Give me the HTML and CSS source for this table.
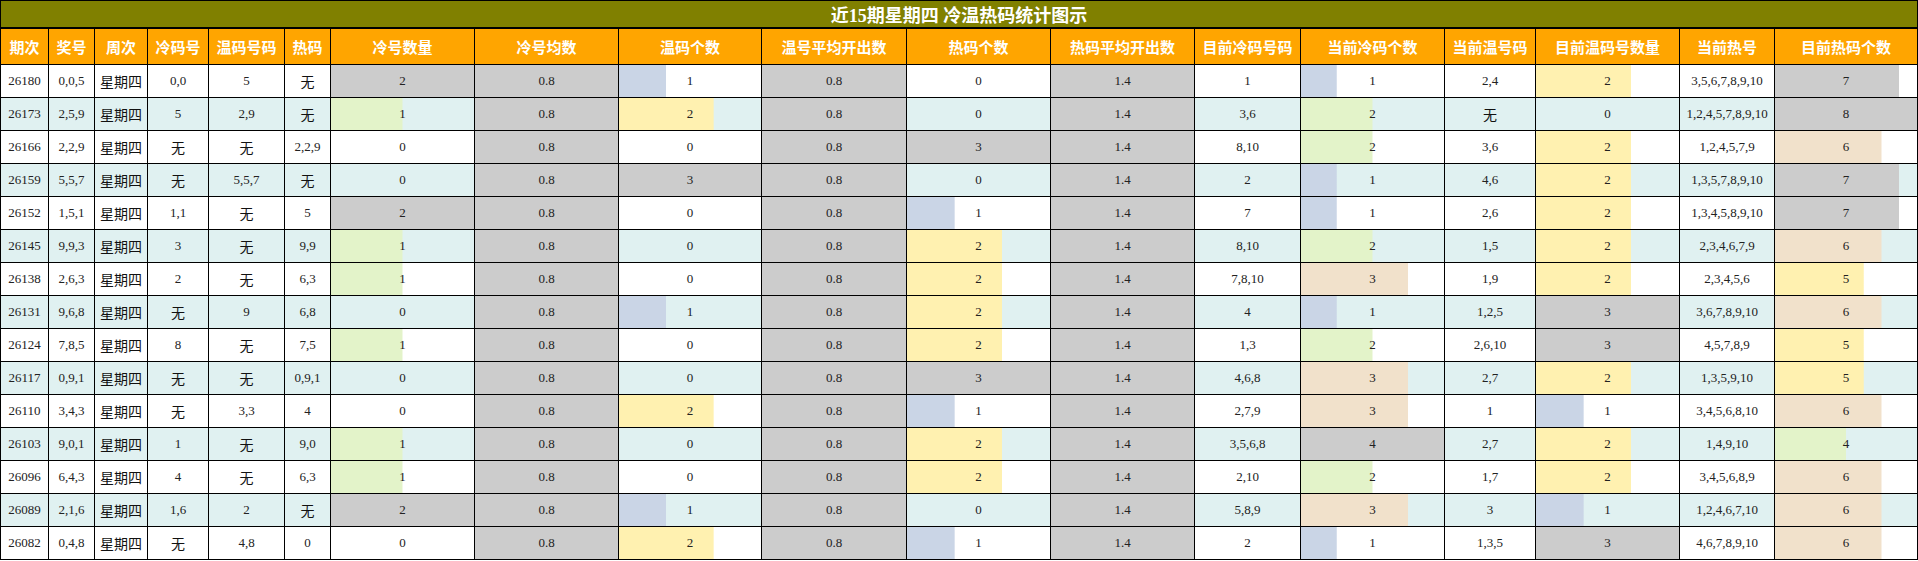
FILE: index.html
```html
<!DOCTYPE html>
<html lang="zh-CN">
<head>
<meta charset="utf-8">
<title>近15期星期四 冷温热码统计图示</title>
<link rel="stylesheet" href="styles.css">
</head>
<body>
<table class="stat">
<colgroup>
<col style="width:48px"><col style="width:46px"><col style="width:53px"><col style="width:61px"><col style="width:76px"><col style="width:46px">
<col style="width:144px"><col style="width:144px"><col style="width:143px"><col style="width:145px"><col style="width:144px"><col style="width:144px">
<col style="width:106px"><col style="width:144px"><col style="width:91px"><col style="width:144px"><col style="width:95px"><col style="width:143px">
</colgroup>
<thead>
<tr class="title-row"><th colspan="18">近15期星期四 冷温热码统计图示</th></tr>
<tr class="head-row">
<th>期次</th><th>奖号</th><th>周次</th><th>冷码号</th><th>温码号码</th><th>热码</th><th>冷号数量</th><th>冷号均数</th><th>温码个数</th><th>温号平均开出数</th><th>热码个数</th><th>热码平均开出数</th><th>目前冷码号码</th><th>当前冷码个数</th><th>当前温号码</th><th>目前温码号数量</th><th>当前热号</th><th>目前热码个数</th>
</tr>
</thead>
<tbody>
<tr><td>26180</td><td>0,0,5</td><td class="cjk">星期四</td><td>0,0</td><td>5</td><td class="cjk">无</td><td class="bar gray" style="--w:100%">2</td><td class="avg">0.8</td><td class="bar blue" style="--w:33.33%">1</td><td class="avg">0.8</td><td>0</td><td class="avg">1.4</td><td>1</td><td class="bar blue" style="--w:25%">1</td><td>2,4</td><td class="bar yellow" style="--w:66.67%">2</td><td>3,5,6,7,8,9,10</td><td class="bar gray" style="--w:87.5%">7</td></tr>
<tr><td>26173</td><td>2,5,9</td><td class="cjk">星期四</td><td>5</td><td>2,9</td><td class="cjk">无</td><td class="bar green" style="--w:50%">1</td><td class="avg">0.8</td><td class="bar yellow" style="--w:66.67%">2</td><td class="avg">0.8</td><td>0</td><td class="avg">1.4</td><td>3,6</td><td class="bar green" style="--w:50%">2</td><td class="cjk">无</td><td>0</td><td>1,2,4,5,7,8,9,10</td><td class="bar gray" style="--w:100%">8</td></tr>
<tr><td>26166</td><td>2,2,9</td><td class="cjk">星期四</td><td class="cjk">无</td><td class="cjk">无</td><td>2,2,9</td><td>0</td><td class="avg">0.8</td><td>0</td><td class="avg">0.8</td><td class="bar gray" style="--w:100%">3</td><td class="avg">1.4</td><td>8,10</td><td class="bar green" style="--w:50%">2</td><td>3,6</td><td class="bar yellow" style="--w:66.67%">2</td><td>1,2,4,5,7,9</td><td class="bar tan" style="--w:75%">6</td></tr>
<tr><td>26159</td><td>5,5,7</td><td class="cjk">星期四</td><td class="cjk">无</td><td>5,5,7</td><td class="cjk">无</td><td>0</td><td class="avg">0.8</td><td class="bar gray" style="--w:100%">3</td><td class="avg">0.8</td><td>0</td><td class="avg">1.4</td><td>2</td><td class="bar blue" style="--w:25%">1</td><td>4,6</td><td class="bar yellow" style="--w:66.67%">2</td><td>1,3,5,7,8,9,10</td><td class="bar gray" style="--w:87.5%">7</td></tr>
<tr><td>26152</td><td>1,5,1</td><td class="cjk">星期四</td><td>1,1</td><td class="cjk">无</td><td>5</td><td class="bar gray" style="--w:100%">2</td><td class="avg">0.8</td><td>0</td><td class="avg">0.8</td><td class="bar blue" style="--w:33.33%">1</td><td class="avg">1.4</td><td>7</td><td class="bar blue" style="--w:25%">1</td><td>2,6</td><td class="bar yellow" style="--w:66.67%">2</td><td>1,3,4,5,8,9,10</td><td class="bar gray" style="--w:87.5%">7</td></tr>
<tr><td>26145</td><td>9,9,3</td><td class="cjk">星期四</td><td>3</td><td class="cjk">无</td><td>9,9</td><td class="bar green" style="--w:50%">1</td><td class="avg">0.8</td><td>0</td><td class="avg">0.8</td><td class="bar yellow" style="--w:66.67%">2</td><td class="avg">1.4</td><td>8,10</td><td class="bar green" style="--w:50%">2</td><td>1,5</td><td class="bar yellow" style="--w:66.67%">2</td><td>2,3,4,6,7,9</td><td class="bar tan" style="--w:75%">6</td></tr>
<tr><td>26138</td><td>2,6,3</td><td class="cjk">星期四</td><td>2</td><td class="cjk">无</td><td>6,3</td><td class="bar green" style="--w:50%">1</td><td class="avg">0.8</td><td>0</td><td class="avg">0.8</td><td class="bar yellow" style="--w:66.67%">2</td><td class="avg">1.4</td><td>7,8,10</td><td class="bar tan" style="--w:75%">3</td><td>1,9</td><td class="bar yellow" style="--w:66.67%">2</td><td>2,3,4,5,6</td><td class="bar yellow" style="--w:62.5%">5</td></tr>
<tr><td>26131</td><td>9,6,8</td><td class="cjk">星期四</td><td class="cjk">无</td><td>9</td><td>6,8</td><td>0</td><td class="avg">0.8</td><td class="bar blue" style="--w:33.33%">1</td><td class="avg">0.8</td><td class="bar yellow" style="--w:66.67%">2</td><td class="avg">1.4</td><td>4</td><td class="bar blue" style="--w:25%">1</td><td>1,2,5</td><td class="bar gray" style="--w:100%">3</td><td>3,6,7,8,9,10</td><td class="bar tan" style="--w:75%">6</td></tr>
<tr><td>26124</td><td>7,8,5</td><td class="cjk">星期四</td><td>8</td><td class="cjk">无</td><td>7,5</td><td class="bar green" style="--w:50%">1</td><td class="avg">0.8</td><td>0</td><td class="avg">0.8</td><td class="bar yellow" style="--w:66.67%">2</td><td class="avg">1.4</td><td>1,3</td><td class="bar green" style="--w:50%">2</td><td>2,6,10</td><td class="bar gray" style="--w:100%">3</td><td>4,5,7,8,9</td><td class="bar yellow" style="--w:62.5%">5</td></tr>
<tr><td>26117</td><td>0,9,1</td><td class="cjk">星期四</td><td class="cjk">无</td><td class="cjk">无</td><td>0,9,1</td><td>0</td><td class="avg">0.8</td><td>0</td><td class="avg">0.8</td><td class="bar gray" style="--w:100%">3</td><td class="avg">1.4</td><td>4,6,8</td><td class="bar tan" style="--w:75%">3</td><td>2,7</td><td class="bar yellow" style="--w:66.67%">2</td><td>1,3,5,9,10</td><td class="bar yellow" style="--w:62.5%">5</td></tr>
<tr><td>26110</td><td>3,4,3</td><td class="cjk">星期四</td><td class="cjk">无</td><td>3,3</td><td>4</td><td>0</td><td class="avg">0.8</td><td class="bar yellow" style="--w:66.67%">2</td><td class="avg">0.8</td><td class="bar blue" style="--w:33.33%">1</td><td class="avg">1.4</td><td>2,7,9</td><td class="bar tan" style="--w:75%">3</td><td>1</td><td class="bar blue" style="--w:33.33%">1</td><td>3,4,5,6,8,10</td><td class="bar tan" style="--w:75%">6</td></tr>
<tr><td>26103</td><td>9,0,1</td><td class="cjk">星期四</td><td>1</td><td class="cjk">无</td><td>9,0</td><td class="bar green" style="--w:50%">1</td><td class="avg">0.8</td><td>0</td><td class="avg">0.8</td><td class="bar yellow" style="--w:66.67%">2</td><td class="avg">1.4</td><td>3,5,6,8</td><td class="bar gray" style="--w:100%">4</td><td>2,7</td><td class="bar yellow" style="--w:66.67%">2</td><td>1,4,9,10</td><td class="bar green" style="--w:50%">4</td></tr>
<tr><td>26096</td><td>6,4,3</td><td class="cjk">星期四</td><td>4</td><td class="cjk">无</td><td>6,3</td><td class="bar green" style="--w:50%">1</td><td class="avg">0.8</td><td>0</td><td class="avg">0.8</td><td class="bar yellow" style="--w:66.67%">2</td><td class="avg">1.4</td><td>2,10</td><td class="bar green" style="--w:50%">2</td><td>1,7</td><td class="bar yellow" style="--w:66.67%">2</td><td>3,4,5,6,8,9</td><td class="bar tan" style="--w:75%">6</td></tr>
<tr><td>26089</td><td>2,1,6</td><td class="cjk">星期四</td><td>1,6</td><td>2</td><td class="cjk">无</td><td class="bar gray" style="--w:100%">2</td><td class="avg">0.8</td><td class="bar blue" style="--w:33.33%">1</td><td class="avg">0.8</td><td>0</td><td class="avg">1.4</td><td>5,8,9</td><td class="bar tan" style="--w:75%">3</td><td>3</td><td class="bar blue" style="--w:33.33%">1</td><td>1,2,4,6,7,10</td><td class="bar tan" style="--w:75%">6</td></tr>
<tr><td>26082</td><td>0,4,8</td><td class="cjk">星期四</td><td class="cjk">无</td><td>4,8</td><td>0</td><td>0</td><td class="avg">0.8</td><td class="bar yellow" style="--w:66.67%">2</td><td class="avg">0.8</td><td class="bar blue" style="--w:33.33%">1</td><td class="avg">1.4</td><td>2</td><td class="bar blue" style="--w:25%">1</td><td>1,3,5</td><td class="bar gray" style="--w:100%">3</td><td>4,6,7,8,9,10</td><td class="bar tan" style="--w:75%">6</td></tr>
</tbody>
</table>
</body>
</html>
```

FILE: styles.css
```css
html, body {
  margin: 0;
  padding: 0;
  background: #ffffff;
}

.stat {
  width: 1917px;
  table-layout: fixed;
  border-collapse: collapse;
  font-family: "Liberation Serif", "Noto Sans CJK SC", serif;
  font-size: 13px;
  color: #222222;
}

.stat th,
.stat td {
  border: 1px solid #000000;
  padding: 0;
  text-align: center;
  vertical-align: middle;
  overflow: hidden;
  white-space: nowrap;
}

.title-row th {
  height: 25px;
  background: #808000;
  color: #ffffff;
  font-size: 18px;
  font-weight: bold;
  border-bottom: 2px solid #000000;
}

.head-row th {
  height: 35px;
  background: #ffa500;
  color: #ffffff;
  font-size: 15px;
  font-weight: bold;
}

.stat tbody td {
  height: 32px;
  background-color: #ffffff;
}

.stat tbody tr:nth-child(even) td {
  background-color: #e0f1f1;
}

.stat td.cjk {
  font-size: 14px;
  color: #111111;
}

.stat tbody td.avg,
.stat tbody tr:nth-child(even) td.avg {
  background-color: #cccccc;
}

.bar {
  background-repeat: no-repeat;
  background-position: left top;
  background-size: var(--w) 100%;
}

.bar.blue { background-image: linear-gradient(#cad5e6, #cad5e6); }
.bar.green { background-image: linear-gradient(#e3f3c9, #e3f3c9); }
.bar.yellow { background-image: linear-gradient(#fff1b0, #fff1b0); }
.bar.tan { background-image: linear-gradient(#f1e1cb, #f1e1cb); }
.bar.gray { background-image: linear-gradient(#cccccc, #cccccc); }
```
